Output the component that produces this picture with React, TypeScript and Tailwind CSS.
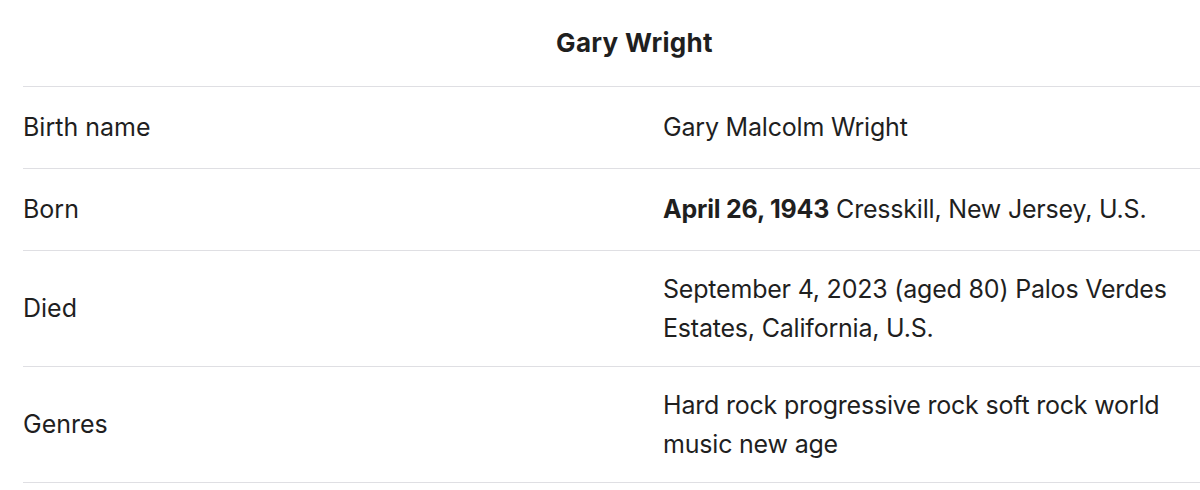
const rows: { label: string; value: React.ReactNode }[] = [
  { label: "Birth name", value: "Gary Malcolm Wright" },
  {
    label: "Born",
    value: (
      <>
        <span className="font-bold">April 26, 1943</span> Cresskill, New Jersey, U.S.
      </>
    ),
  },
  { label: "Died", value: "September 4, 2023 (aged 80) Palos Verdes Estates, California, U.S." },
  { label: "Genres", value: "Hard rock progressive rock soft rock world music new age" },
];

export default function App() {
  return (
    <div className="w-[1200px] h-[490px] overflow-hidden bg-white font-['Inter','Liberation_Sans',sans-serif] text-[#1f1f1f]">
      <table className="ml-[23px] w-[1223px] border-collapse table-fixed">
        <colgroup>
          <col className="w-[640px]" />
          <col />
        </colgroup>
        <thead>
          <tr className="border-b border-[#dfdfe3]">
            <th colSpan={2} className="py-[26px] text-center text-[26px] leading-[34px] font-bold tracking-[0.3px]">
              Gary Wright
            </th>
          </tr>
        </thead>
        <tbody>
          {rows.map((row) => (
            <tr key={row.label} className="border-b border-[#dfdfe3]">
              <td className="h-[82px] py-[18.5px] pr-6 align-middle text-[25px] leading-[39px]">{row.label}</td>
              <td className="h-[82px] py-[18.5px] pr-6 align-middle text-[25px] leading-[39px] tracking-[-0.2px]">
                <div className="max-w-[530px]">{row.value}</div>
              </td>
            </tr>
          ))}
        </tbody>
      </table>
    </div>
  );
}
